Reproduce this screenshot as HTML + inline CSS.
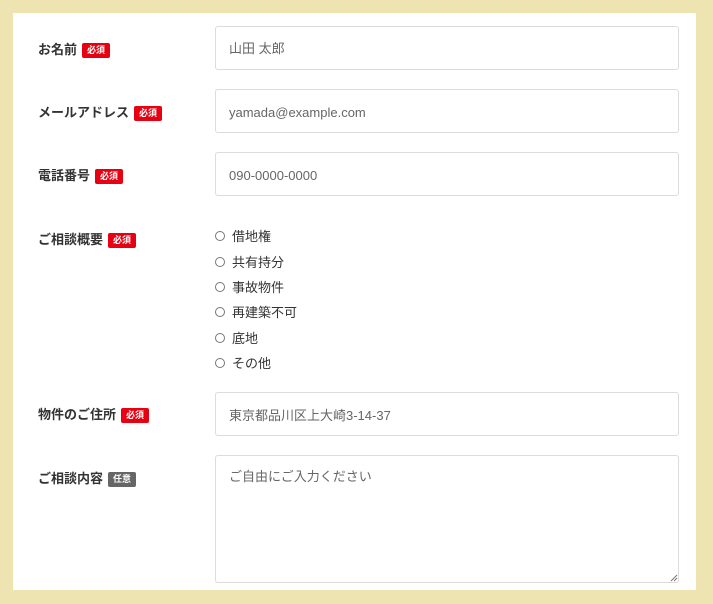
<!DOCTYPE html>
<html><head><meta charset="utf-8"><style>
body{margin:0;width:713px;height:604px;background:#eee4b1;font-family:"Liberation Sans","Noto Sans CJK JP",sans-serif;position:relative;overflow:hidden}
.panel{position:absolute;left:13px;top:13px;width:683px;height:577px;background:#fff}
.lab{position:absolute;left:38px;font-size:13px;font-weight:bold;color:#333;line-height:16px;white-space:nowrap}
.b{display:inline-block;background:#e60012;color:#fff;font-size:9px;font-weight:bold;line-height:15px;padding:0 5px;border-radius:2px;margin-left:5px;vertical-align:1px}
.b.g{background:#666}
.in{position:absolute;left:215px;width:464px;border:1px solid #dcdcdc;border-radius:3px;box-sizing:border-box;font-size:13px;color:#666;padding-left:13px}
.r{position:absolute;left:215px;font-size:13px;color:#333;line-height:16px}
.r i{display:inline-block;width:8px;height:8px;border:1px solid #777;border-radius:50%;margin-right:7px;vertical-align:0px}
</style></head><body>
<div class="panel"></div>
<div class="lab" style="top:42px">お名前<span class="b">必須</span></div>
<div class="in" style="top:26px;height:44px;line-height:43px">山田 太郎</div>
<div class="lab" style="top:105px">メールアドレス<span class="b">必須</span></div>
<div class="in" style="top:89px;height:44px;line-height:45px">yamada@example.com</div>
<div class="lab" style="top:168px">電話番号<span class="b">必須</span></div>
<div class="in" style="top:152px;height:44px;line-height:45px">090-0000-0000</div>
<div class="lab" style="top:232px">ご相談概要<span class="b">必須</span></div>
<div class="r" style="top:229px"><i></i>借地権</div>
<div class="r" style="top:255px"><i></i>共有持分</div>
<div class="r" style="top:280px"><i></i>事故物件</div>
<div class="r" style="top:305px"><i></i>再建築不可</div>
<div class="r" style="top:331px"><i></i>底地</div>
<div class="r" style="top:356px"><i></i>その他</div>
<div class="lab" style="top:407px">物件のご住所<span class="b">必須</span></div>
<div class="in" style="top:392px;height:44px;line-height:45px">東京都品川区上大崎3-14-37</div>
<div class="lab" style="top:471px">ご相談内容<span class="b g">任意</span></div>
<div class="in" style="top:455px;height:128px;line-height:16px;padding-top:13px">ご自由にご入力ください</div>
<svg style="position:absolute;left:670px;top:574px" width="8" height="8"><path d="M1 7L7 1M4 7L7 4" stroke="#777" stroke-width="1"/></svg>
</body></html>
